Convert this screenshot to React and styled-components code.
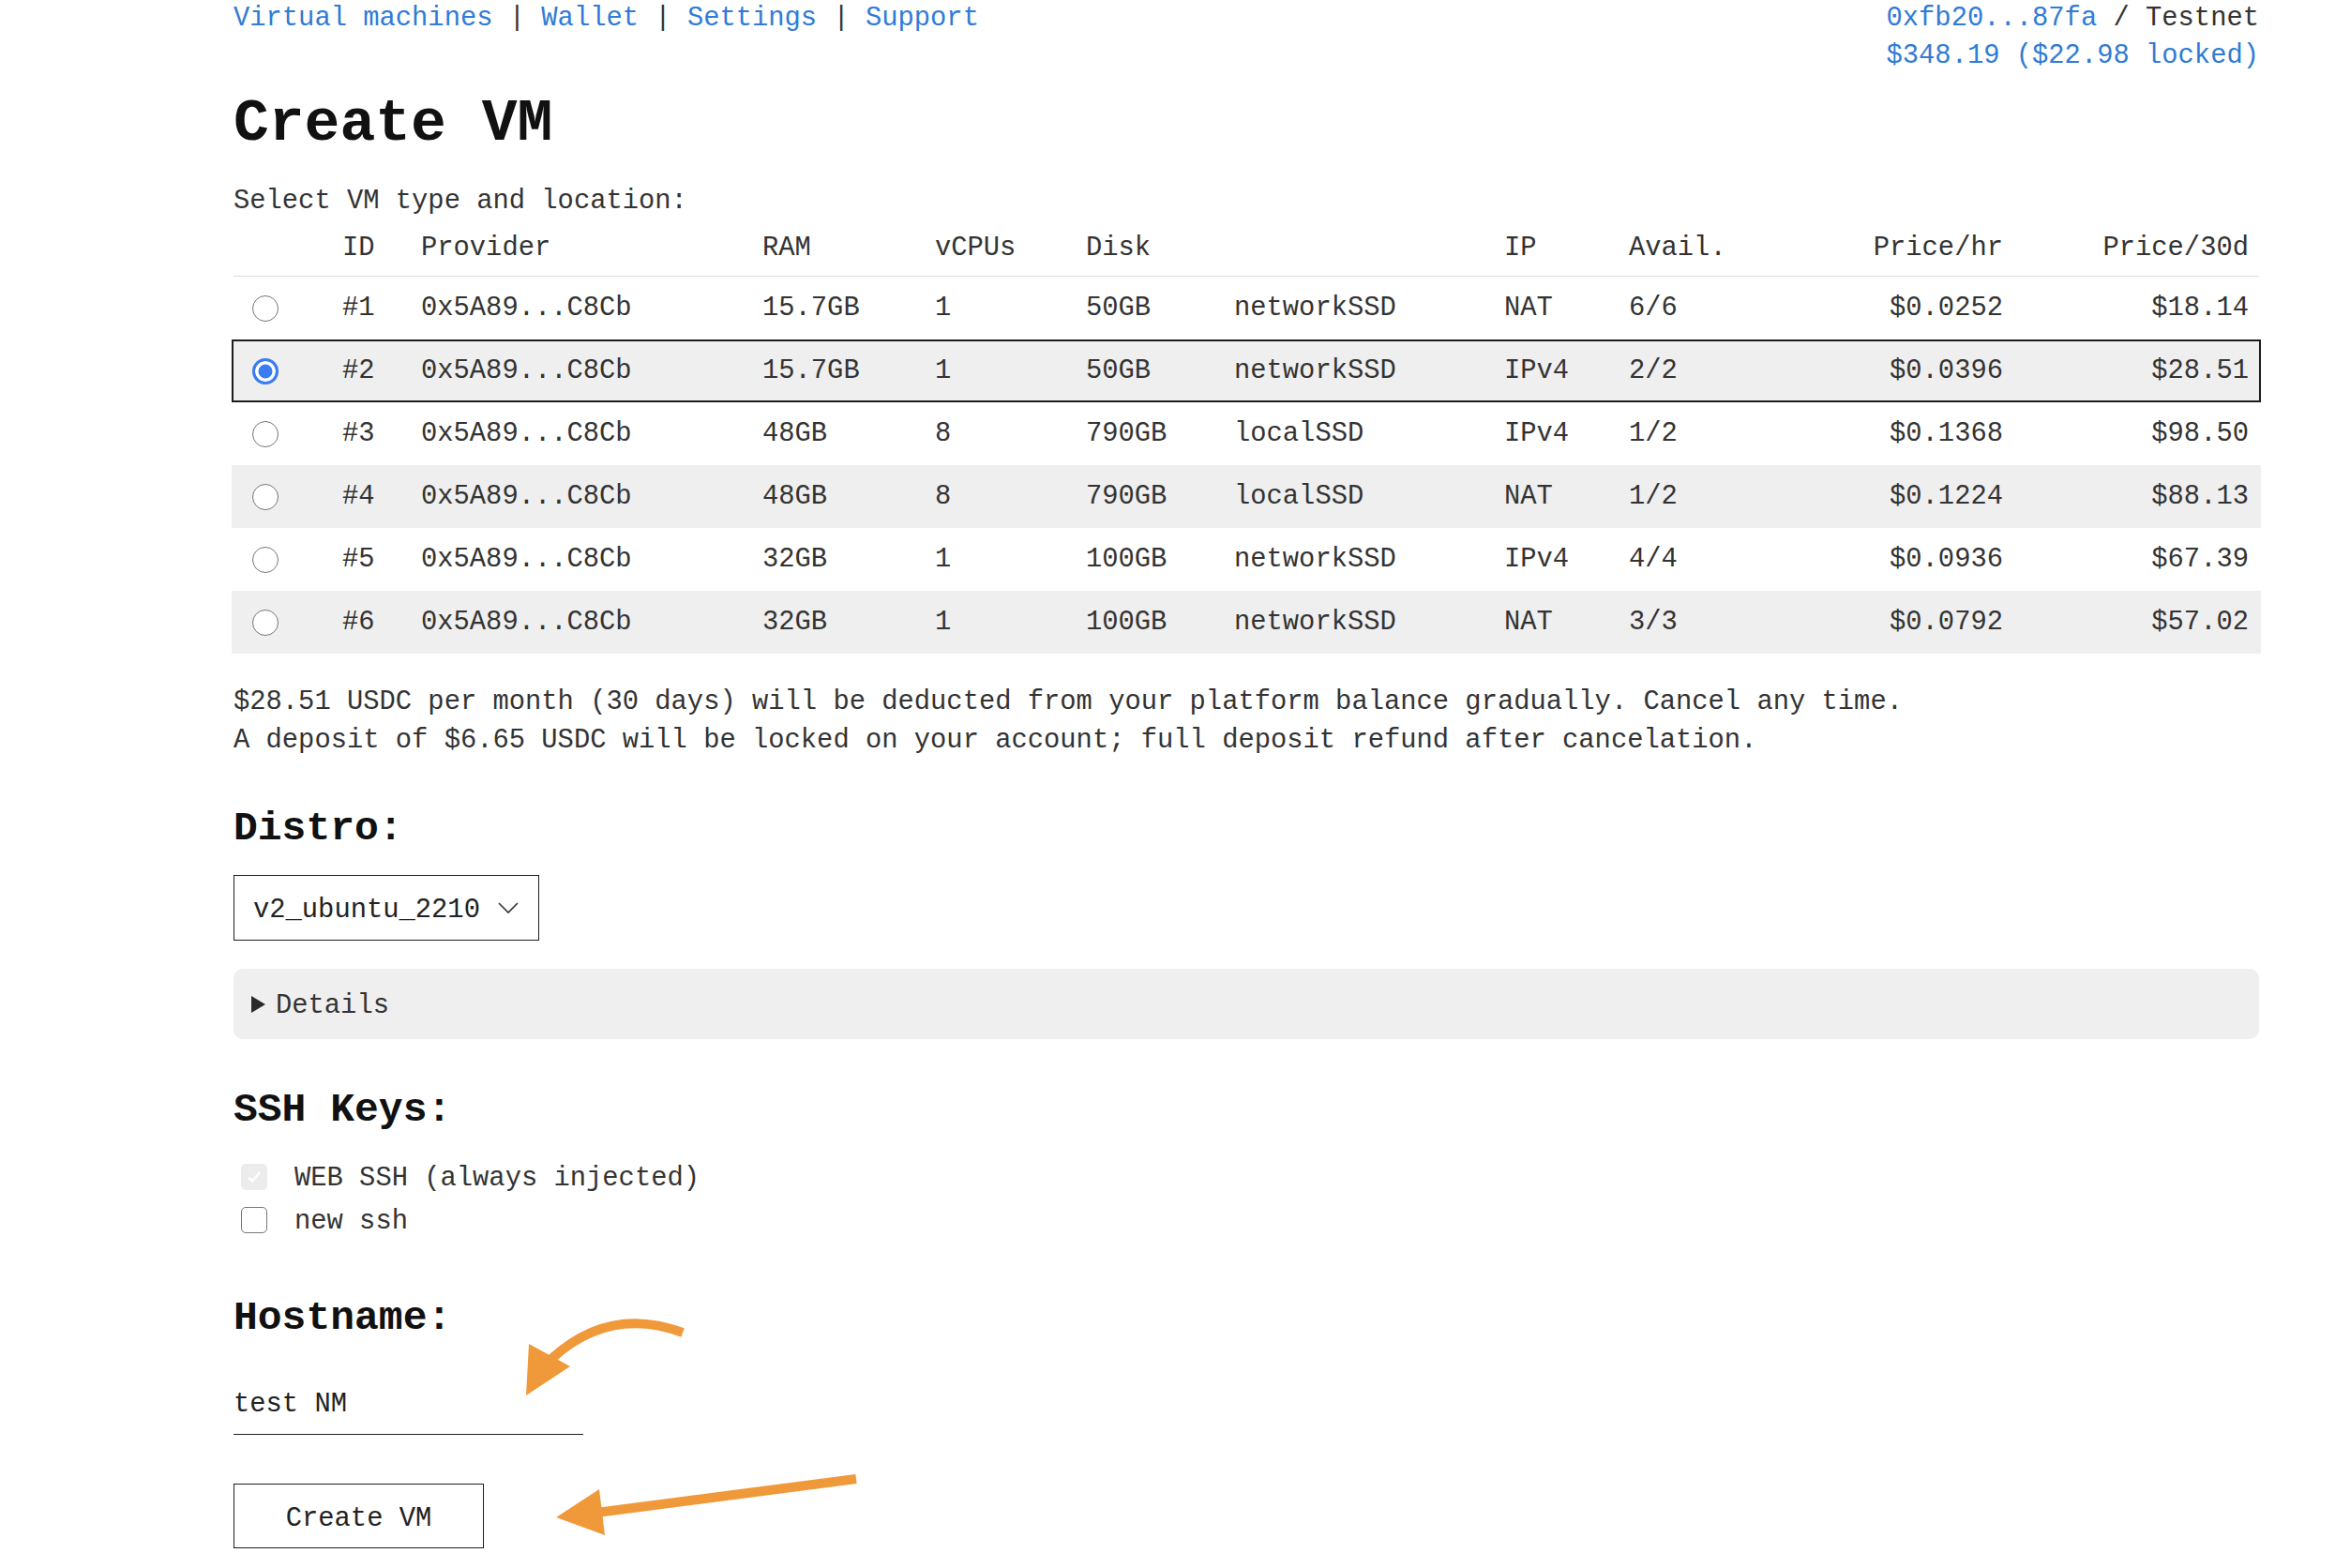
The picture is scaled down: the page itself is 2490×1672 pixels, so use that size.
import React, { useState } from "react";
import styled, { createGlobalStyle } from "styled-components";

const GlobalStyle = createGlobalStyle`
  html, body {
    margin: 0;
    padding: 0;
    background: #fff;
  }
  body {
    font-family: "Liberation Mono", "Courier New", monospace;
    font-size: 28.8px;
    line-height: 41px;
    color: #333;
  }
`;

const COLS = "100px 84px 364px 184px 161px 158px 288px 133px 200px 226px 262px";

const Page = styled.div`
  position: relative;
  width: 2160px;
  padding-left: 249px;
  min-height: 1672px;
  box-sizing: content-box;
`;

const Header = styled.header`
  display: flex;
  justify-content: space-between;
  align-items: flex-start;
  line-height: 39px;
`;

const Nav = styled.nav`
  white-space: pre;
`;

const Link = styled.a`
  color: #2f7bd6;
  text-decoration: none;
  cursor: pointer;
`;

const Sep = styled.span`
  color: #333;
`;

const Account = styled.div`
  text-align: right;
  white-space: pre;
  line-height: 40px;
`;

const Title = styled.h1`
  margin: 15px 0 0;
  font-size: 63px;
  line-height: 76px;
  font-weight: bold;
  color: #111;
`;

const Intro = styled.p`
  margin: 24px 0 0;
  line-height: 40px;
`;

const Table = styled.div`
  display: flex;
  flex-direction: column;
`;

const HeadRow = styled.div`
  display: grid;
  grid-template-columns: ${COLS};
  padding: 10px 0 9px;
  line-height: 40px;
  border-bottom: 1px solid #dcdcdc;
`;

const Row = styled.div`
  display: grid;
  grid-template-columns: ${COLS};
  align-items: center;
  height: 67px;
  box-sizing: border-box;
  background: ${(p) => (p.$striped ? "#efefef" : "transparent")};
  border: 2px solid ${(p) => (p.$selected ? "#1d1d1d" : "transparent")};
  margin: 0 -2px;
  cursor: pointer;
`;

const Cell = styled.div`
  padding: ${(p) => (p.$right ? "0 11px 0 0" : "0 0 0 16px")};
  text-align: ${(p) => (p.$right ? "right" : "left")};
  white-space: nowrap;
  display: flex;
  align-items: center;
  justify-content: ${(p) => (p.$right ? "flex-end" : "flex-start")};
`;

const Radio = styled.input.attrs({ type: "radio" })`
  appearance: none;
  -webkit-appearance: none;
  width: 28px;
  height: 28px;
  margin: 0 0 0 4px;
  border-radius: 50%;
  box-sizing: border-box;
  border: 1.5px solid #767676;
  background: #fff;
  cursor: pointer;

  &:checked {
    border: 3px solid #3a7cf2;
    background: #3a7cf2;
    box-shadow: inset 0 0 0 3.5px #fff;
  }
`;

const Summary = styled.p`
  margin: 31px 0 0;
  line-height: 41px;
`;

const SectionTitle = styled.h2`
  margin: ${(p) => p.$top}px 0 0;
  font-size: 43px;
  line-height: 52px;
  font-weight: bold;
  color: #111;
`;

const SelectBox = styled.div`
  margin-top: 23px;
  display: inline-flex;
  align-items: center;
  gap: 18px;
  height: 70px;
  box-sizing: border-box;
  padding: 4px 20px 0 20px;
  border: 1.5px solid #1d1d1d;
  color: #222;
  align-self: flex-start;
  cursor: pointer;
`;

const Details = styled.details`
  margin-top: 30px;
  background: #efefef;
  border-radius: 10px;
`;

const DetailsSummary = styled.summary`
  display: flex;
  align-items: center;
  gap: 11px;
  height: 75px;
  padding: 3px 19px 0;
  box-sizing: border-box;
  list-style: none;
  cursor: pointer;
  color: #333;

  &::-webkit-details-marker {
    display: none;
  }
`;

const Triangle = styled.span`
  width: 0;
  height: 0;
  margin-top: -3px;
  border-left: 15px solid #2a2a2a;
  border-top: 9px solid transparent;
  border-bottom: 9px solid transparent;
`;

const KeyList = styled.div`
  margin-top: 23px;
  display: flex;
  flex-direction: column;
`;

const KeyRow = styled.label`
  display: flex;
  align-items: center;
  gap: 29px;
  height: 46px;
  padding-left: 8px;
  cursor: pointer;
`;

const CheckBox = styled.span`
  width: 28px;
  height: 28px;
  margin-top: -3px;
  box-sizing: border-box;
  border-radius: 5px;
  display: flex;
  align-items: center;
  justify-content: center;
  background: ${(p) => (p.$disabled ? "#ececec" : "#fff")};
  border: ${(p) => (p.$disabled ? "none" : "1.5px solid #777")};
`;

const HostInput = styled.input`
  margin-top: 28px;
  width: 373px;
  height: 70px;
  box-sizing: border-box;
  padding: 6px 0 0;
  border: none;
  border-bottom: 1.5px solid #1d1d1d;
  font: inherit;
  color: #222;
  background: transparent;
  outline: none;
`;

const Button = styled.button`
  margin-top: 52px;
  width: 267px;
  height: 69px;
  box-sizing: border-box;
  padding: 5px 0 0;
  border: 1.5px solid #1d1d1d;
  background: #fff;
  font: inherit;
  color: #222;
  cursor: pointer;
  align-self: flex-start;
`;

const Form = styled.div`
  display: flex;
  flex-direction: column;
`;

const Annotations = styled.svg`
  position: absolute;
  top: 0;
  left: 0;
  pointer-events: none;
`;

const vms = [
  { id: 1, ram: "15.7GB", cpu: 1, disk: "50GB", type: "networkSSD", ip: "NAT", avail: "6/6", hr: "$0.0252", month: "$18.14" },
  { id: 2, ram: "15.7GB", cpu: 1, disk: "50GB", type: "networkSSD", ip: "IPv4", avail: "2/2", hr: "$0.0396", month: "$28.51" },
  { id: 3, ram: "48GB", cpu: 8, disk: "790GB", type: "localSSD", ip: "IPv4", avail: "1/2", hr: "$0.1368", month: "$98.50" },
  { id: 4, ram: "48GB", cpu: 8, disk: "790GB", type: "localSSD", ip: "NAT", avail: "1/2", hr: "$0.1224", month: "$88.13" },
  { id: 5, ram: "32GB", cpu: 1, disk: "100GB", type: "networkSSD", ip: "IPv4", avail: "4/4", hr: "$0.0936", month: "$67.39" },
  { id: 6, ram: "32GB", cpu: 1, disk: "100GB", type: "networkSSD", ip: "NAT", avail: "3/3", hr: "$0.0792", month: "$57.02" },
];

const Chevron = () => (
  <svg width="24" height="14" viewBox="0 0 24 14" style={{ marginTop: -4 }}>
    <polyline points="2,2 12,12 22,2" fill="none" stroke="#333" strokeWidth="1.6" />
  </svg>
);

const Check = () => (
  <svg width="18" height="18" viewBox="0 0 18 18">
    <polyline points="3,9.5 7,13.5 15,4" fill="none" stroke="#fff" strokeWidth="2.6" />
  </svg>
);

const App = () => {
  const [selected, setSelected] = useState(2);
  const [hostname, setHostname] = useState("test NM");
  const [newSsh, setNewSsh] = useState(false);

  return (
    <Page>
      <GlobalStyle />
      <Header>
        <Nav>
          <Link>Virtual machines</Link>
          <Sep> | </Sep>
          <Link>Wallet</Link>
          <Sep> | </Sep>
          <Link>Settings</Link>
          <Sep> | </Sep>
          <Link>Support</Link>
        </Nav>
        <Account>
          <div>
            <Link>0xfb20...87fa</Link> / Testnet
          </div>
          <div>
            <Link>$348.19 ($22.98 locked)</Link>
          </div>
        </Account>
      </Header>

      <Title>Create VM</Title>
      <Intro>Select VM type and location:</Intro>

      <Table>
        <HeadRow>
          <Cell />
          <Cell>ID</Cell>
          <Cell>Provider</Cell>
          <Cell>RAM</Cell>
          <Cell>vCPUs</Cell>
          <Cell>Disk</Cell>
          <Cell />
          <Cell>IP</Cell>
          <Cell>Avail.</Cell>
          <Cell $right>Price/hr</Cell>
          <Cell $right>Price/30d</Cell>
        </HeadRow>
        {vms.map((vm, i) => (
          <Row
            key={vm.id}
            $striped={i % 2 === 1}
            $selected={selected === vm.id}
            onClick={() => setSelected(vm.id)}
          >
            <Cell>
              <Radio
                name="vm"
                checked={selected === vm.id}
                onChange={() => setSelected(vm.id)}
              />
            </Cell>
            <Cell>#{vm.id}</Cell>
            <Cell>0x5A89...C8Cb</Cell>
            <Cell>{vm.ram}</Cell>
            <Cell>{vm.cpu}</Cell>
            <Cell>{vm.disk}</Cell>
            <Cell>{vm.type}</Cell>
            <Cell>{vm.ip}</Cell>
            <Cell>{vm.avail}</Cell>
            <Cell $right>{vm.hr}</Cell>
            <Cell $right>{vm.month}</Cell>
          </Row>
        ))}
      </Table>

      <Summary>
        $28.51 USDC per month (30 days) will be deducted from your platform balance gradually. Cancel any time.
        <br />
        A deposit of $6.65 USDC will be locked on your account; full deposit refund after cancelation.
      </Summary>

      <Form>
        <SectionTitle $top={48}>Distro:</SectionTitle>
        <SelectBox>
          <span>v2_ubuntu_2210</span>
          <Chevron />
        </SelectBox>

        <Details>
          <DetailsSummary>
            <Triangle />
            <span>Details</span>
          </DetailsSummary>
        </Details>

        <SectionTitle $top={50}>SSH Keys:</SectionTitle>
        <KeyList>
          <KeyRow>
            <CheckBox $disabled>
              <Check />
            </CheckBox>
            <span>WEB SSH (always injected)</span>
          </KeyRow>
          <KeyRow onClick={() => setNewSsh(!newSsh)}>
            <CheckBox>{newSsh && <Check />}</CheckBox>
            <span>new ssh</span>
          </KeyRow>
        </KeyList>

        <SectionTitle $top={55}>Hostname:</SectionTitle>
        <HostInput value={hostname} onChange={(e) => setHostname(e.target.value)} />

        <Button>Create VM</Button>
      </Form>

      {/* orange annotation arrows drawn over the form */}
      <Annotations width="2490" height="1672" viewBox="0 0 2490 1672">
        <path
          d="M 728 1421 Q 650 1392 588 1449"
          fill="none"
          stroke="#f0993a"
          strokeWidth="10"
        />
        <polygon points="561,1488 564,1433 608,1457" fill="#f0993a" />
        <line x1="913" y1="1577" x2="636" y2="1613" stroke="#f0993a" strokeWidth="10" />
        <polygon points="593,1618 639,1588 645,1637" fill="#f0993a" />
      </Annotations>
    </Page>
  );
};

export default App;
